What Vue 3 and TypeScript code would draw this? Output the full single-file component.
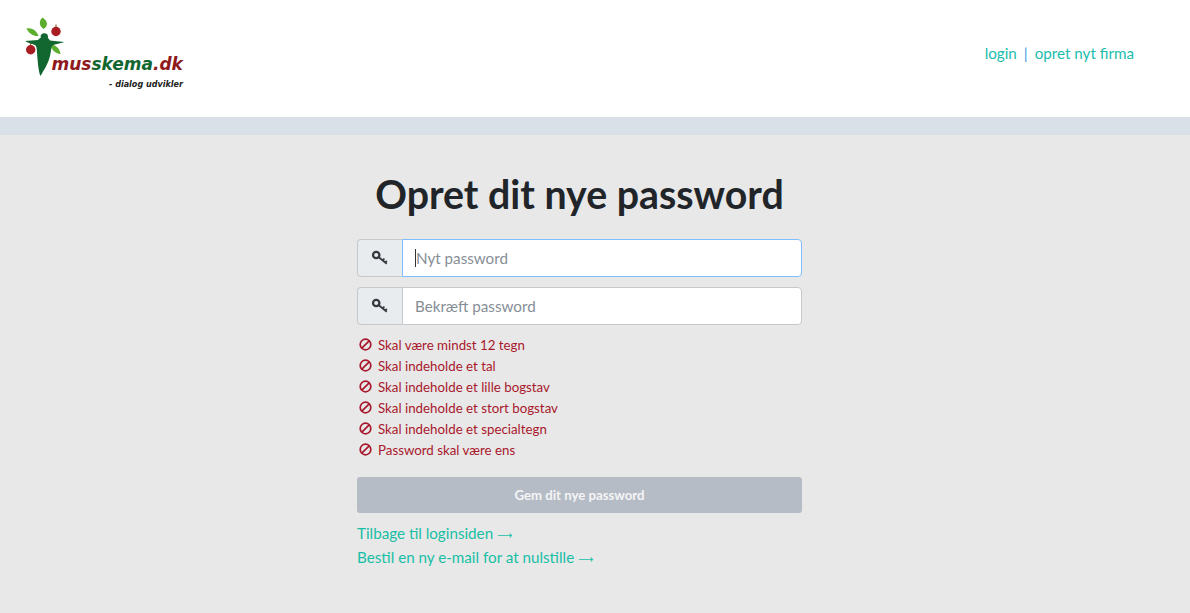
<script setup lang="ts">
const rules: string[] = [
  'Skal være mindst 12 tegn',
  'Skal indeholde et tal',
  'Skal indeholde et lille bogstav',
  'Skal indeholde et stort bogstav',
  'Skal indeholde et specialtegn',
  'Password skal være ens',
]

const placeholders: string[] = ['Nyt password', 'Bekræft password']
</script>

<template>
  <div class="page">
    <header class="header">
      <svg class="logo" width="170" height="80" viewBox="20 12 170 80" aria-label="musskema.dk">
        <path d="M42.500 17.500c-3.500 3-4 8 1 11.500 5-3 4.500-8-1-11.500z" fill="#5cae2f" />
        <path d="M26.500 28.500c2.500 5 7 8 12 7.500-2-5.500-6.500-8.500-12-7.500z" fill="#5cae2f" />
        <path d="M50.500 44.500c.5 5 4.500 9 10 9.500-.5-5-4.500-9.500-10-9.500z" fill="#5cae2f" />
        <circle cx="56" cy="31.500" r="4.700" fill="#a81c22" />
        <path d="M56 27v-2.500" stroke="#7a4a20" stroke-width="1" />
        <circle cx="30.700" cy="49.700" r="4.700" fill="#a81c22" />
        <path d="M30.700 45v-2.500" stroke="#7a4a20" stroke-width="1" />
        <circle cx="44.300" cy="37" r="3.700" fill="#12662f" />
        <path d="M25 41l13-1 2-2h8l2 2.500 14.300 1.500c-6 2-11.300 2.500-12.300 4-1 2-1 6-2 10-1.500 7-6 14-9.500 20-2-4-3-16-3.500-24-.2-4-.5-6-2-7-4-1.500-7-2-10-4z" fill="#12662f" />
        <text x="51.500" y="70" class="logo-name"><tspan fill="#8f1a1e">mus</tspan><tspan fill="#12662f">skema</tspan><tspan fill="#8f1a1e">.dk</tspan></text>
        <text x="109" y="87" class="logo-tag" textLength="74" lengthAdjust="spacingAndGlyphs">- dialog udvikler</text>
      </svg>
      <nav class="nav">
        <a class="link">login</a>
        <span class="sep">|</span>
        <a class="link">opret nyt firma</a>
      </nav>
    </header>
    <div class="band"></div>
    <main class="main">
      <div class="panel">
        <h1 class="title">Opret dit nye password</h1>
        <div
          v-for="(ph, i) in placeholders"
          :key="ph"
          class="field"
        >
          <span class="addon">
            <svg width="18" height="18" viewBox="0 0 18 18">
              <circle cx="5.200" cy="6" r="3.200" fill="none" stroke="#343a40" stroke-width="2.300" />
              <path d="M7.800 8.200l8 6.500M11.500 11.500l1.900-2M14 13.600l1.800-1.800" fill="none" stroke="#343a40" stroke-width="1.800" />
            </svg>
          </span>
          <div class="input" :class="{ focused: i === 0 }">
            <span v-if="i === 0" class="caret"></span>
            <span class="placeholder">{{ ph }}</span>
          </div>
        </div>
        <ul class="rules">
          <li v-for="r in rules" :key="r" class="rule">
            <svg class="ban" width="13" height="13" viewBox="0 0 13 13">
              <circle cx="6.500" cy="6.500" r="5.300" fill="none" stroke="#a8182c" stroke-width="1.700" />
              <path d="M2.800 10.200l7.400-7.400" stroke="#a8182c" stroke-width="1.700" />
            </svg>
            <span>{{ r }}</span>
          </li>
        </ul>
        <button class="submit" disabled>Gem dit nye password</button>
        <a class="back">Tilbage til loginsiden <span class="arrow">⟶</span></a>
        <a class="back">Bestil en ny e-mail for at nulstille <span class="arrow">⟶</span></a>
      </div>
    </main>
  </div>
</template>

<style>
html,
body {
  background: #fff;
}
</style>

<style scoped>
.page {
  display: flex;
  flex-direction: column;
  height: 613px;
  overflow: hidden;
  font-family: Lato, 'Open Sans', 'Liberation Sans', sans-serif;
  color: #212529;
}
.header {
  display: flex;
  justify-content: space-between;
  height: 117px;
  padding: 12px 56px 0 20px;
  box-sizing: border-box;
  background: #fff;
}
.logo {
  display: block;
}
.logo-name {
  font-family: 'DejaVu Sans', sans-serif;
  font-size: 17px;
  font-weight: 700;
  font-style: italic;
}
.logo-tag {
  font-family: 'DejaVu Sans', sans-serif;
  font-size: 8px;
  font-weight: 700;
  font-style: italic;
  fill: #222;
}
.nav {
  display: flex;
  gap: 7px;
  height: 44px;
  margin-top: 19px;
  align-items: center;
  font-size: 15.200px;
}
.link {
  color: #20bdae;
}
.sep {
  color: #3d9be0;
}
.band {
  height: 18px;
  background: #dae0e8;
}
.main {
  flex: 1;
  display: flex;
  justify-content: center;
  padding-right: 31px;
  background: #e8e8e8;
}
.panel {
  display: flex;
  flex-direction: column;
  width: 445px;
}
.title {
  margin: 37px 0 24px;
  font-size: 39.300px;
  line-height: 43px;
  font-weight: 700;
  text-align: center;
  white-space: nowrap;
}
.field {
  display: flex;
  height: 38px;
  margin-bottom: 10px;
}
.addon {
  display: flex;
  align-items: center;
  justify-content: center;
  width: 45px;
  box-sizing: border-box;
  border: 1px solid #c6c9cc;
  border-right: 0;
  border-radius: 4px 0 0 4px;
  background: #e9ecef;
}
.input {
  flex: 1;
  display: flex;
  align-items: center;
  padding-left: 12px;
  box-sizing: border-box;
  border: 1px solid #c6c9cc;
  border-radius: 0 4px 4px 0;
  background: #fff;
}
.input.focused {
  border-color: #80bdff;
}
.caret {
  width: 1px;
  height: 18px;
  background: #333;
}
.placeholder {
  font-size: 15.200px;
  color: #868e96;
}
.rules {
  list-style: none;
  margin: -1px 0 17px;
  padding: 0;
}
.rule {
  display: flex;
  align-items: center;
  gap: 6px;
  height: 21px;
  padding-left: 2px;
  font-size: 13.300px;
  color: #a8182c;
}
.submit {
  height: 36px;
  border: 0;
  border-radius: 3px;
  margin-bottom: 8px;
  padding: 0 0 1px;
  background: #b6bcc5;
  color: #f4f5f6;
  font-family: inherit;
  font-size: 13.200px;
  font-weight: 700;
}
.back {
  font-size: 15.200px;
  line-height: 24px;
  color: #17bfa6;
}
.arrow {
  font-family: 'DejaVu Sans', sans-serif;
  font-size: 10.500px;
  line-height: 1;
}
</style>
